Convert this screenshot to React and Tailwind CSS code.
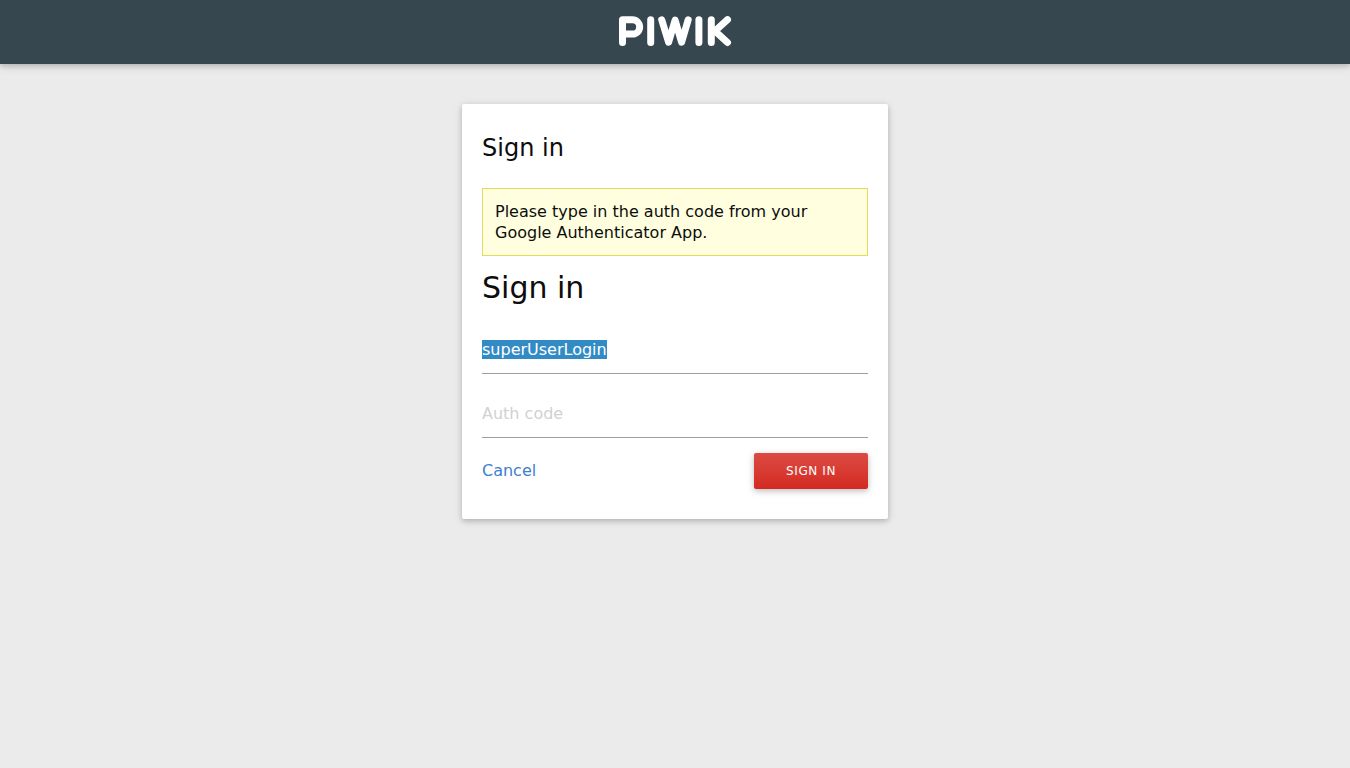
import { useEffect, useRef } from "react";

function Logo() {
  return (
    <svg
      role="img"
      aria-label="Piwik"
      width="114"
      height="32"
      viewBox="0 0 114 32"
      fill="none"
      stroke="#ffffff"
      strokeWidth="7"
      strokeLinecap="round"
      strokeLinejoin="round"
    >
      <path d="M4.5 27.5V4.8h10a7.1 7.1 0 0 1 0 14.3h-10" />
      <path d="M32.7 4.7v22.8" />
      <path d="M43.7 4.8 50.6 27.2 57.1 5.2 63.6 27.2 70.2 4.8" />
      <path d="M80.9 4.7v22.8" />
      <path d="M93.3 4.7v22.8M109.5 4.7 97 16l12.5 11.5" />
    </svg>
  );
}

const fieldClass =
  "block h-12 w-full border-b border-[#9e9e9e] bg-transparent text-base text-[#0d0d0d] outline-none placeholder:text-[#d1d1d1] selection:bg-[#338bc6] selection:text-white";

export default function App() {
  const loginRef = useRef(null);

  useEffect(() => {
    loginRef.current.focus();
    loginRef.current.select();
  }, []);

  return (
    <div className="min-h-screen bg-[#ebebeb] font-['DejaVu_Sans',sans-serif] text-[#0d0d0d]">
      <header className="flex h-16 justify-center bg-[#37474f] pt-[15px] shadow-[0_2px_5px_0_rgba(0,0,0,0.16),0_2px_10px_0_rgba(0,0,0,0.12)]">
        <Logo />
      </header>
      <main className="mx-auto mt-10 w-full max-w-[426px] rounded-xs bg-white px-5 pt-6 pb-[30px] shadow-[0_2px_5px_0_rgba(0,0,0,0.16),0_2px_10px_0_rgba(0,0,0,0.12)]">
        <h2 className="text-2xl leading-10">Sign in</h2>
        <p className="mt-5 border border-[#e0dc5c] bg-[#ffffe0] p-3 text-base leading-[21px]">
          Please type in the auth code from your Google Authenticator App.
        </p>
        <h1 className="mt-3 text-3xl leading-10">Sign in</h1>
        <form className="mt-[18px]" onSubmit={(e) => e.preventDefault()}>
          <input
            ref={loginRef}
            type="text"
            aria-label="Username"
            defaultValue="superUserLogin"
            className={fieldClass}
          />
          <div className="mt-4">
            <input type="text" aria-label="Auth code" placeholder="Auth code" className={fieldClass} />
          </div>
          <div className="mt-[15px] flex items-center justify-between">
            <a href="#cancel" className="text-base text-[#3d80cc]">
              Cancel
            </a>
            <button
              type="submit"
              className="h-9 rounded-xs bg-linear-to-b from-[#dc4a43] to-[#d3291f] px-8 text-xs tracking-wider text-white uppercase shadow-[0_2px_5px_0_rgba(0,0,0,0.16),0_2px_10px_0_rgba(0,0,0,0.12)]"
            >
              Sign in
            </button>
          </div>
        </form>
      </main>
    </div>
  );
}
